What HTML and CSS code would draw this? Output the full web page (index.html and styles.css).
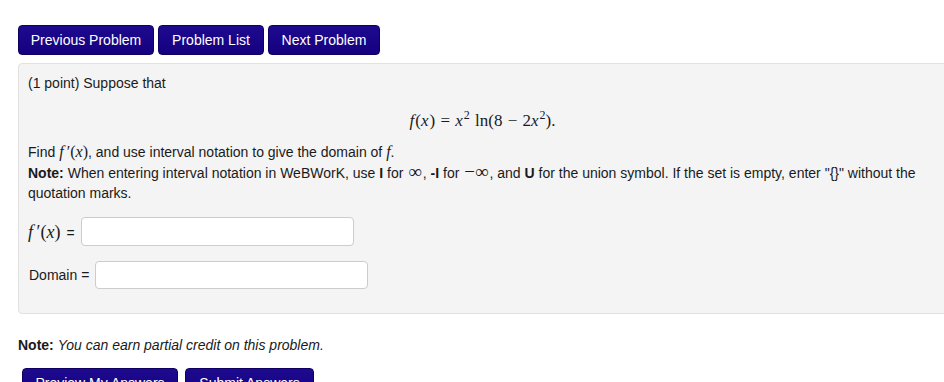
FILE: index.html
```html
<!DOCTYPE html>
<html>
<head>
<meta charset="utf-8">
<link rel="stylesheet" href="styles.css">
</head>
<body>
<div class="page">
  <div class="nav">
    <button class="btn nav-prev">Previous Problem</button>
    <button class="btn nav-list">Problem List</button>
    <button class="btn nav-next">Next Problem</button>
  </div>
  <div class="panel">
    <div class="line">(1 point) Suppose that</div>
    <div class="equation math"><i>f</i>(<i>x</i>) = <i>x</i><sup>2</sup> ln(8 − 2<i>x</i><sup>2</sup>).</div>
    <div class="line">Find <span class="math"><i>f</i>&thinsp;′(<i>x</i>)</span>, and use interval notation to give the domain of <span class="math"><i>f</i></span>.</div>
    <div class="line"><b>Note:</b> When entering interval notation in WeBWorK, use <b>I</b> for <span class="math inf">∞</span>, <b>-I</b> for <span class="math inf">−∞</span>, and <b>U</b> for the union symbol. If the set is empty, enter "{}" without the quotation marks.</div>
    <div class="answer answer-first">
      <span class="label math-label"><span class="math"><i>f</i>&thinsp;′(<i>x</i>)</span> =</span>
      <span class="field"></span>
    </div>
    <div class="answer answer-second">
      <span class="label">Domain =</span>
      <span class="field"></span>
    </div>
  </div>
  <div class="credit"><b>Note:</b> <i>You can earn partial credit on this problem.</i></div>
  <div class="actions">
    <button class="btn act-preview">Preview My Answers</button>
    <button class="btn act-submit">Submit Answers</button>
  </div>
</div>
</body>
</html>
```

FILE: styles.css
```css
html, body {
  margin: 0;
  padding: 0;
  background: #fff;
  overflow: hidden;
}
body {
  font-family: "Liberation Sans", Arial, sans-serif;
  font-size: 14px;
  color: #1a1a1a;
}
.page {
  padding: 25px 0 0 18px;
  width: 930px;
}
.nav {
  display: flex;
  gap: 4px;
}
.btn {
  font-family: "Liberation Sans", Arial, sans-serif;
  font-size: 14px;
  color: #fff;
  background: linear-gradient(#1d0a8e, #15007f);
  border: 1px solid #0d0060;
  border-radius: 4px;
  height: 30px;
  padding: 0 8px;
  margin: 0;
  cursor: pointer;
  white-space: nowrap;
}
.nav-prev { width: 136px; }
.nav-list { width: 106px; }
.nav-next { width: 112px; }
.panel {
  margin-top: 8px;
  background: #f4f4f4;
  border: 1px solid #e1e1e1;
  border-radius: 4px;
  padding: 9px 10px 24px 9px;
}
.line {
  line-height: 20px;
}
.math {
  font-family: "Liberation Serif", "Times New Roman", serif;
  font-size: 16px;
  line-height: 1;
}
.math i { font-style: italic; }
.inf {
  font-size: 19px;
  padding: 0 1px;
}
.equation {
  text-align: center;
  line-height: 20px;
  margin: 18px 0 11px;
  font-size: 17px;
  word-spacing: 1px;
}
.equation i { margin-right: 1px; }
.equation sup {
  font-size: 12px;
  line-height: 0;
  vertical-align: 7px;
}
.answer {
  display: flex;
  align-items: center;
  gap: 6px;
}
.answer-first {
  margin-top: 14px;
}
.answer-second {
  margin-top: 15px;
  padding-left: 1px;
}
.label {
  white-space: nowrap;
}
.math-label .math { font-size: 18px; margin-right: 2px; }
.field {
  display: block;
  width: 271px;
  height: 27px;
  background: #fff;
  border: 1px solid #cccccc;
  border-radius: 4px;
}
.answer-second .field { height: 26px; }
.credit {
  margin-top: 21px;
  line-height: 20px;
}
.actions {
  margin-top: 13px;
  padding-left: 4px;
  display: flex;
  gap: 7px;
}
.act-preview { width: 156px; }
.act-submit { width: 129px; }
```
